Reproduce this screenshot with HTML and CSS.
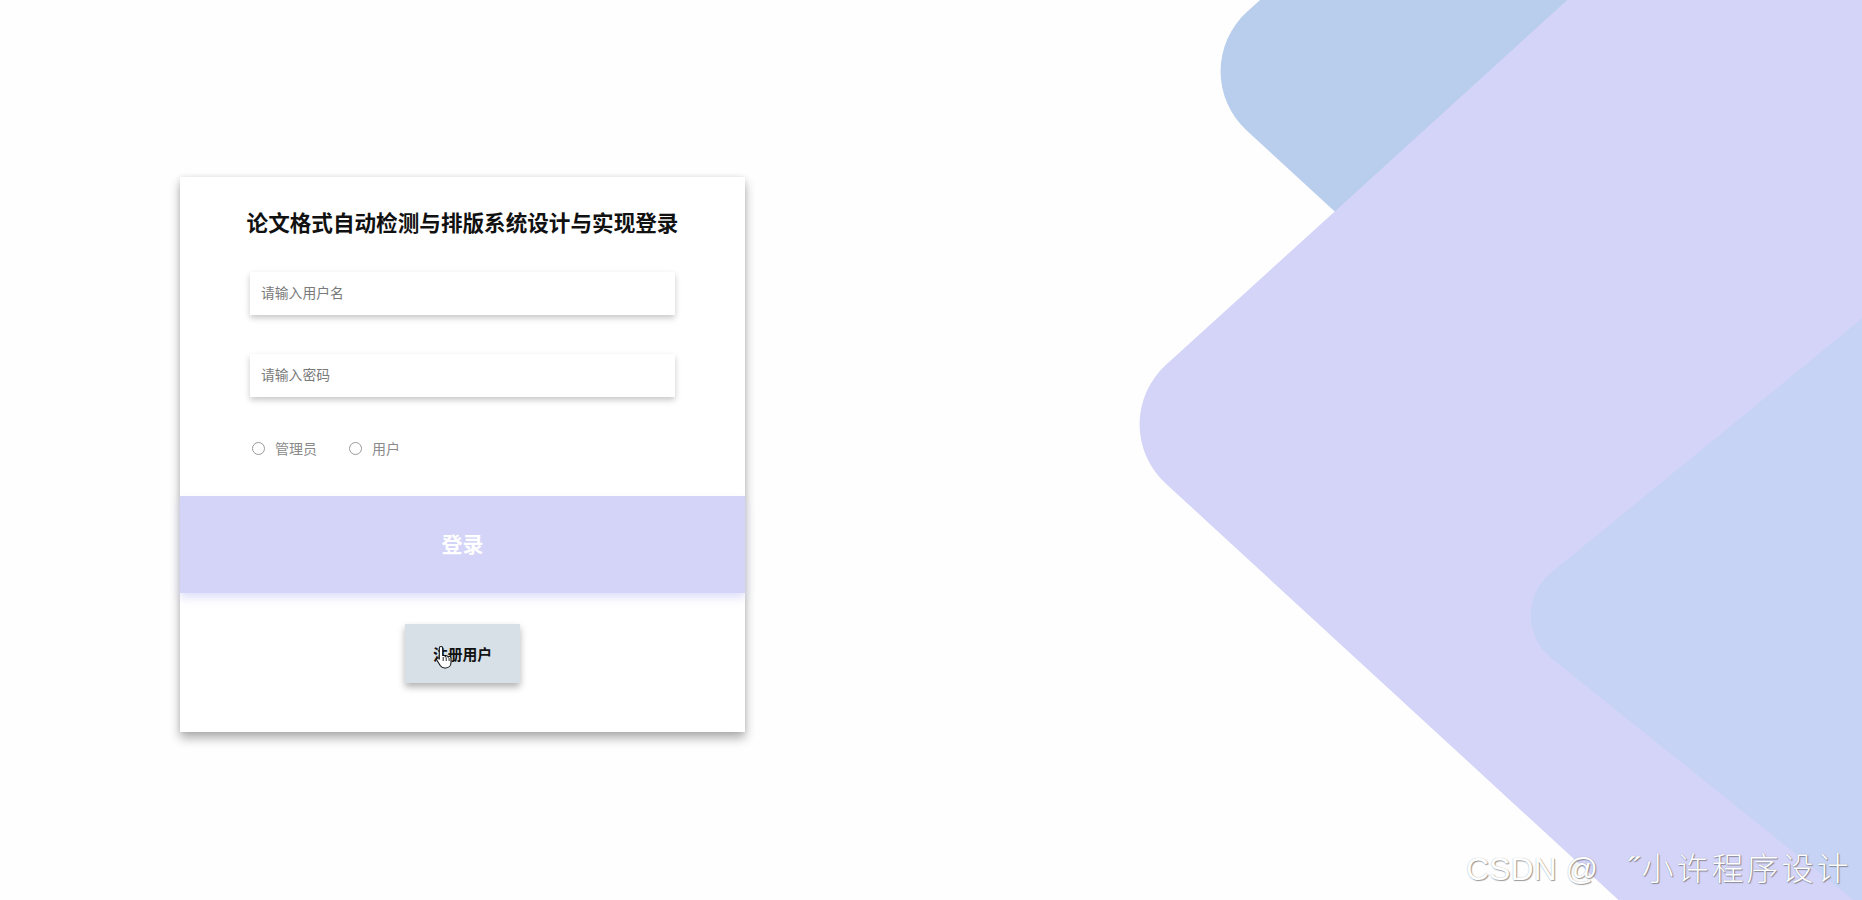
FILE: index.html
```html
<!DOCTYPE html>
<html lang="zh-CN">
<head>
<meta charset="utf-8">
<title>登录</title>
<link rel="stylesheet" href="styles.css">
</head>
<body>
<svg class="bg-shapes" viewBox="0 0 1862 900" width="1862" height="900" aria-hidden="true">
  <path class="shape-a" d="M1986.8,-660.9 L1246.8,12.1 A80,80 0 0 0 1246.4,130.2 L1982.4,807.2 L2100,807 L2100,-661 Z"/>
  <path class="shape-b" d="M1905.8,-307.9 L1165.8,365.1 A80,80 0 0 0 1165.4,483.2 L1901.4,1160.2 L2100,1160 L2100,-308 Z"/>
  <path class="shape-c" d="M2325,-60 L1549.9,573.8 A55,55 0 0 0 1551.5,658.3 L2332.5,1283.3 Z"/>
</svg>

<main class="page">
  <section class="card">
    <h1 class="title">论文格式自动检测与排版系统设计与实现登录</h1>
    <div class="field"><input class="input" type="text" placeholder="请输入用户名"></div>
    <div class="field field-2"><input class="input" type="password" placeholder="请输入密码"></div>
    <div class="roles">
      <label class="role"><span class="radio"></span><span class="role-text">管理员</span></label>
      <label class="role"><span class="radio"></span><span class="role-text">用户</span></label>
    </div>
    <button class="login" type="button">登录</button>
    <div class="reg-row">
      <button class="register" type="button">注册用户</button>
      <svg class="cursor" viewBox="0 0 20 24" width="20" height="24" aria-hidden="true">
        <path d="M6 1.5c1 0 1.7.7 1.7 1.7v7.2l1-.2c.9 0 1.5.5 1.6 1.2.3-.4.8-.6 1.3-.6.8 0 1.4.5 1.6 1.2.3-.3.7-.5 1.2-.5.9 0 1.6.7 1.600 1.6v4.4c0 3.2-2.4 5.5-5.6 5.5H9.6c-1.8 0-3.2-.8-4.2-2.2L1.9 15.3c-.5-.8-.3-1.7.4-2.1.7-.4 1.6-.2 2.1.5l-.1.1 0-.1V3.2C4.3 2.2 5 1.5 6 1.5z" fill="#fff" stroke="#111" stroke-width="1.1"/>
        <path d="M8.2 12v4M11.2 12.3v3.7M14.1 13v3" stroke="#111" stroke-width="0.9" fill="none"/>
      </svg>
    </div>
  </section>
</main>

<div class="watermark">CSDN @&nbsp;&nbsp;<span class="wm-cjk">˝小许程序设计</span></div>
</body>
</html>
```

FILE: styles.css
```css
* { box-sizing: border-box; }

html, body {
  margin: 0;
  padding: 0;
  width: 1862px;
  height: 900px;
  overflow: hidden;
  background: #fefefe;
  font-family: "Noto Sans CJK SC", "Noto Sans", sans-serif;
}

.bg-shapes {
  position: absolute;
  left: 0;
  top: 0;
  z-index: 0;
}
.shape-a { fill: #b9cdec; }
.shape-b { fill: #d3d4f7; }
.shape-c { fill: #c6d3f4; }

.page {
  position: relative;
  z-index: 1;
  padding: 177px 0 0 180px;
}

.card {
  width: 565px;
  height: 555px;
  background: #ffffff;
  box-shadow: 0 6px 10px rgba(0, 0, 0, 0.32), 0 0 5px rgba(0, 0, 0, 0.08);
  padding-top: 31px;
  display: flex;
  flex-direction: column;
  align-items: center;
}

.title {
  margin: 0;
  font-size: 21.6px;
  line-height: 28px;
  font-weight: 700;
  color: #111;
  white-space: nowrap;
}

.field {
  margin-top: 36px;
  width: 425px;
}
.field-2 { margin-top: 39px; }

.input {
  display: block;
  width: 425px;
  height: 43px;
  border: none;
  outline: none;
  background: #fff;
  box-shadow: 0 3px 6px rgba(0, 0, 0, 0.22);
  padding: 0 11px 3px;
  font-family: "Noto Sans CJK SC", sans-serif;
  font-size: 13.8px;
  color: #333;
}
.input::placeholder { color: #7a7a7a; }

.roles {
  margin-top: 41px;
  width: 425px;
  height: 20px;
  padding-left: 2px;
  display: flex;
  align-items: center;
  gap: 32px;
}
.role {
  display: flex;
  align-items: center;
  gap: 10px;
}
.radio {
  width: 13px;
  height: 13px;
  border: 1px solid #9a9a9a;
  border-radius: 50%;
  background: #fff;
}
.role-text {
  font-size: 14px;
  color: #8a8a8a;
  line-height: 20px;
}

.login {
  margin-top: 38px;
  width: 100%;
  height: 97px;
  border: none;
  background: #d3d4f7;
  box-shadow: 0 5px 8px rgba(211, 212, 247, 0.7);
  color: #fff;
  font-family: "Noto Sans CJK SC", sans-serif;
  font-size: 21px;
  font-weight: 700;
  padding: 0 0 4px;
}

.reg-row {
  margin-top: 31px;
  position: relative;
}
.register {
  display: block;
  width: 115px;
  height: 59px;
  border: none;
  background: #d7dfe7;
  box-shadow: 0 4px 7px rgba(0, 0, 0, 0.3);
  font-family: "Noto Sans CJK SC", sans-serif;
  font-size: 14.8px;
  font-weight: 700;
  color: #111;
  padding: 0;
}
.cursor {
  position: absolute;
  left: 30px;
  top: 21px;
}

.watermark {
  position: absolute;
  left: 1466px;
  top: 846px;
  z-index: 2;
  font-family: "Liberation Sans", "Noto Sans CJK SC", sans-serif;
  font-size: 32px;
  line-height: 40px;
  color: #ffffff;
  text-shadow: 1px 1px 1px rgba(80, 80, 80, 0.55), 0 0 1px rgba(60, 60, 60, 0.4);
  white-space: nowrap;
}
.wm-cjk {
  margin-left: 12px;
  font-family: "Noto Sans CJK SC", sans-serif;
  font-weight: 300;
  letter-spacing: 3px;
}
```
